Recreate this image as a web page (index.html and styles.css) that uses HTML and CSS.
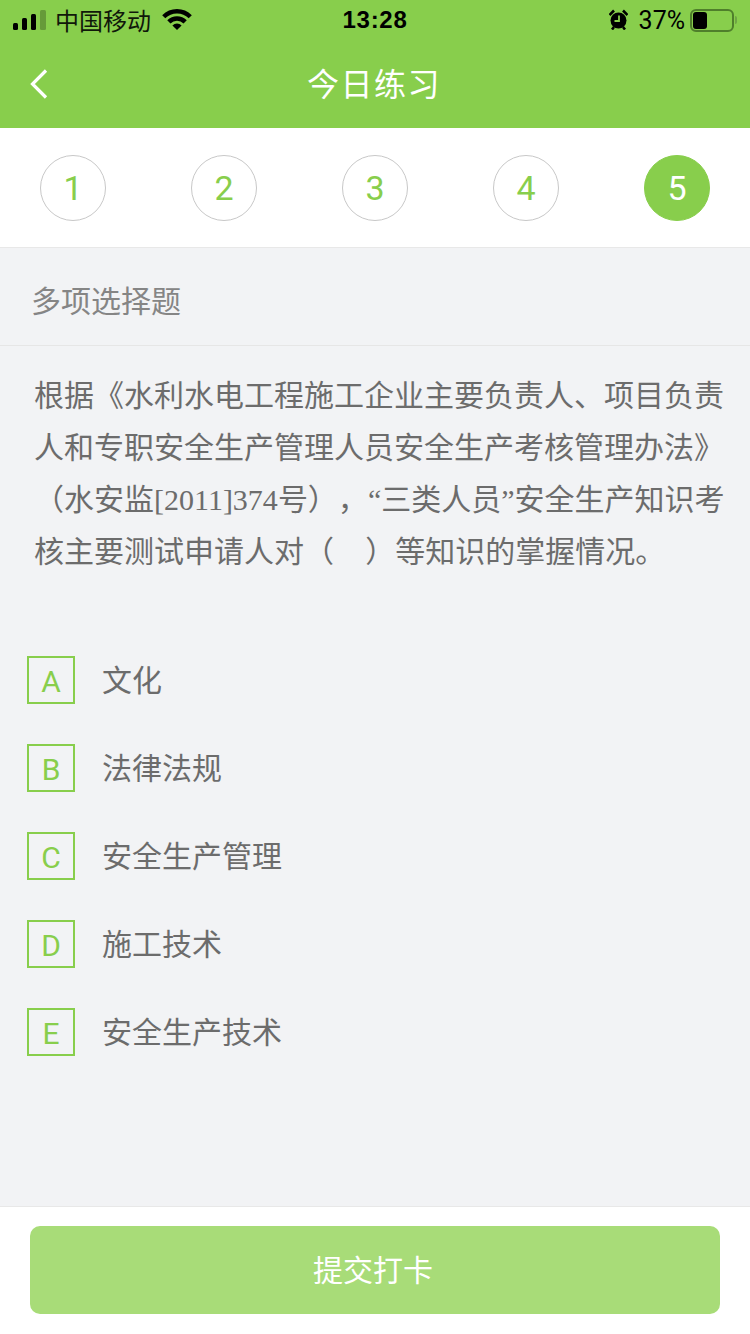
FILE: index.html
```html
<!DOCTYPE html>
<html lang="zh-CN">
<head>
    <meta charset="UTF-8">
    <meta name="viewport" content="width=device-width, initial-scale=1.0">
    <title>今日练习</title>
    <link rel="stylesheet" href="styles.css">
</head>
<body>
    <div class="page">
        <header class="top">
            <div class="status">
                <div class="status-left">
                    <svg class="signal" width="33" height="20" viewBox="0 0 33 20">
                        <rect x="0" y="13" width="5" height="7" rx="1.500" fill="#000"/>
                        <rect x="9" y="8" width="5" height="12" rx="1.500" fill="#000"/>
                        <rect x="18" y="4" width="5" height="16" rx="1.500" fill="#000"/>
                        <rect x="27" y="0" width="6" height="20" rx="1.500" fill="#000" fill-opacity="0.25"/>
                    </svg>
                    <span class="carrier">中国移动</span>
                    <svg class="wifi" width="30" height="22" viewBox="0 0 30 22">
                        <path d="M15 21L10.400 16.400A6.500 6.500 0 0 1 19.600 16.400Z" fill="#000"/>
                        <path d="M6.870 12.870A11.500 11.500 0 0 1 23.130 12.870" fill="none" stroke="#000" stroke-width="4.600"/>
                        <path d="M1.740 7.740A18.750 18.750 0 0 1 28.260 7.740" fill="none" stroke="#000" stroke-width="4.400"/>
                    </svg>
                </div>
                <div class="clock">13:28</div>
                <div class="status-right">
                    <svg class="alarm" width="19" height="21" viewBox="0 0 19 21">
                        <circle cx="9.500" cy="11.500" r="8" fill="#000"/>
                        <path d="M0.500 6L5 1.500M18.500 6L14 1.500M3 20.500l2-2.500M16 20.500l-2-2.500" stroke="#000" stroke-width="2.600"/>
                        <path d="M10 6.500v5.500H5.500" fill="none" stroke="#88ce4c" stroke-width="1.800"/>
                    </svg>
                    <span class="battery-pct">37%</span>
                    <div class="battery">
                        <div class="battery-fill"></div>
                    </div>
                    <div class="battery-tip"></div>
                </div>
            </div>
            <div class="nav">
                <svg class="back" width="20" height="32" viewBox="0 0 20 32">
                    <path d="M17 2.500L3.500 16 17 29.500" fill="none" stroke="#fff" stroke-width="3.200"/>
                </svg>
                <h1 class="nav-title">今日练习</h1>
            </div>
        </header>

        <div class="steps">
            <div class="step">1</div>
            <div class="step">2</div>
            <div class="step">3</div>
            <div class="step">4</div>
            <div class="step active">5</div>
        </div>

        <div class="type-row">多项选择题</div>

        <p class="question">根据《水利水电工程施工企业主要负责人、项目负责人和专职安全生产管理人员安全生产考核管理办法》（水安监<span class="serif">[2011]374</span>号），<span class="serif">“</span>三类人员<span class="serif">”</span>安全生产知识考核主要测试申请人对（<span class="blank">&nbsp;&nbsp;&nbsp;&nbsp;</span>）等知识的掌握情况。</p>

        <ul class="options">
            <li class="option"><span class="letter">A</span><span class="option-text">文化</span></li>
            <li class="option"><span class="letter">B</span><span class="option-text">法律法规</span></li>
            <li class="option"><span class="letter">C</span><span class="option-text">安全生产管理</span></li>
            <li class="option"><span class="letter">D</span><span class="option-text">施工技术</span></li>
            <li class="option"><span class="letter">E</span><span class="option-text">安全生产技术</span></li>
        </ul>

        <footer class="bottom">
            <button class="submit" type="button">提交打卡</button>
        </footer>
    </div>
</body>
</html>
```

FILE: styles.css
```css
html, body {
    margin: 0;
    padding: 0;
}
body {
    font-family: "Liberation Sans", "Noto Sans CJK SC", sans-serif;
    background-color: #f2f3f5;
}
.page {
    width: 750px;
    height: 1334px;
    display: flex;
    flex-direction: column;
    overflow: hidden;
}
.top {
    height: 128px;
    background-color: #88ce4c;
    flex: none;
}
.status {
    height: 40px;
    display: flex;
    align-items: center;
    justify-content: space-between;
    padding: 0 13px;
    color: #000;
    position: relative;
}
.status-left, .status-right {
    display: flex;
    align-items: center;
}
.carrier {
    font-size: 24px;
    margin-left: 9px;
    margin-bottom: 2px;
    color: #10180a;
}
.wifi {
    margin-left: 11px;
    margin-bottom: 1px;
}
.clock {
    position: absolute;
    left: 0;
    right: 0;
    text-align: center;
    font-size: 24px;
    font-weight: bold;
    letter-spacing: 0.7px;
}
.alarm {
    margin-bottom: 1px;
}
.battery-pct {
    font-family: Roboto, "Liberation Sans", sans-serif;
    font-size: 25px;
    margin-left: 11px;
    margin-right: 5px;
    padding-top: 1px;
}
.battery {
    width: 44px;
    height: 23px;
    box-sizing: border-box;
    border: 2px solid #4f7f2b;
    border-radius: 6px;
    padding: 1px;
}
.battery-fill {
    width: 14px;
    height: 17px;
    background-color: #000;
    border-radius: 3px;
}
.battery-tip {
    width: 2px;
    height: 8px;
    margin-left: 1px;
    background-color: #6fa544;
    border-radius: 0 2px 2px 0;
}
.nav {
    height: 88px;
    display: flex;
    align-items: center;
    justify-content: center;
    position: relative;
}
.back {
    position: absolute;
    left: 29px;
    top: 28px;
}
.nav-title {
    margin: 0 2px 0 0;
    font-size: 32px;
    font-weight: normal;
    color: #fff;
    letter-spacing: 1.500px;
    padding-bottom: 5px;
}
.steps {
    height: 119px;
    background-color: #fff;
    border-bottom: 1px solid #e8e8e8;
    display: flex;
    align-items: center;
    justify-content: space-between;
    padding: 0 40px;
    flex: none;
}
.step {
    width: 66px;
    height: 66px;
    box-sizing: border-box;
    border: 1px solid #c8c8c8;
    border-radius: 50%;
    display: flex;
    align-items: center;
    justify-content: center;
    font-family: Roboto, "Liberation Sans", sans-serif;
    font-size: 34px;
    color: #88ce4c;
}
.step.active {
    background-color: #88ce4c;
    border-color: #88ce4c;
    color: #fff;
}
.type-row {
    height: 98px;
    box-sizing: border-box;
    border-bottom: 1px solid #e6e6e6;
    padding: 0 31px 0;
    line-height: 108px;
    font-size: 30px;
    color: #858585;
    flex: none;
}
.question {
    margin: 0;
    padding: 24px 25px 0 34px;
    font-size: 30px;
    line-height: 52px;
    color: #6c6c6c;
    text-spacing-trim: space-all;
    flex: none;
}
.serif {
    font-family: "Liberation Serif", serif;
}
.blank {
    letter-spacing: -0.500px;
}
.options {
    list-style: none;
    margin: 0;
    padding: 78px 0 0 27px;
    flex: 1;
}
.option {
    display: flex;
    align-items: center;
    height: 48px;
    margin-bottom: 40px;
}
.letter {
    width: 48px;
    height: 48px;
    box-sizing: border-box;
    border: 2px solid #88ce4c;
    padding-top: 2px;
    display: flex;
    align-items: center;
    justify-content: center;
    font-family: Roboto, "Liberation Sans", sans-serif;
    font-size: 30px;
    color: #88ce4c;
}
.option-text {
    margin-left: 27px;
    padding-bottom: 4px;
    font-size: 30px;
    color: #6c6c6c;
}
.bottom {
    height: 128px;
    box-sizing: border-box;
    background-color: #fff;
    border-top: 1px solid #e8e8e8;
    padding: 19px 30px 0;
    flex: none;
}
.submit {
    display: block;
    width: 100%;
    height: 88px;
    padding: 0 4px 4px 0;
    border: none;
    border-radius: 10px;
    background-color: #a8dc78;
    color: #fff;
    font-family: inherit;
    font-size: 30px;
    cursor: pointer;
}
```
